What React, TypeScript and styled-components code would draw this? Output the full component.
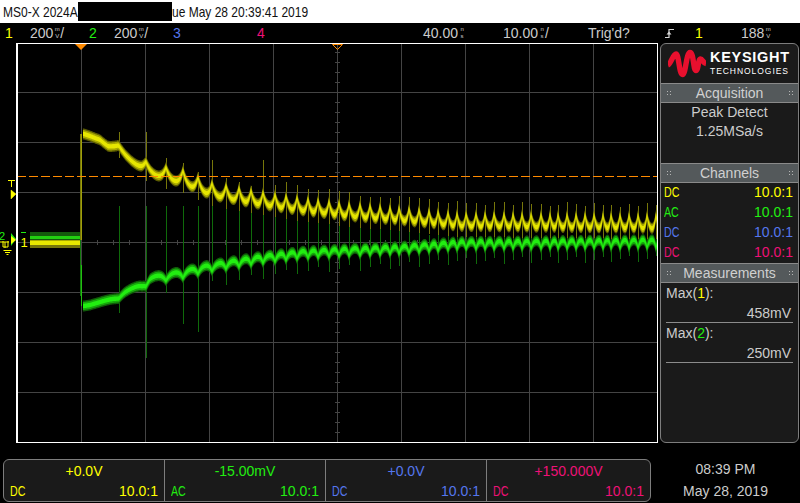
import React from 'react';
import styled, { createGlobalStyle } from 'styled-components';

const YELLOW = '#ffff00';
const GREEN = '#22ee11';
const BLUE = '#5577ee';
const PINK = '#ee1177';

const GlobalStyle = createGlobalStyle`
  html, body {
    margin: 0;
    padding: 0;
    background: #000;
  }
  body {
    font-family: 'Liberation Sans', Arial, sans-serif;
    font-size: 14px;
    color: #cccccc;
  }
`;

const Page = styled.div`
  width: 800px;
  height: 503px;
  overflow: hidden;
  display: flex;
  flex-direction: column;
  background: #000;
`;

const TitleBar = styled.div`
  height: 23px;
  flex: none;
  background: #fff;
  color: #111;
  display: flex;
  align-items: center;
  padding-left: 3px;
  font-size: 15px;
`;

const TitleText = styled.span<{ $width: number }>`
  width: ${(p) => p.$width}px;
  flex: none;
  white-space: nowrap;
  transform: scaleX(0.8);
  transform-origin: left center;
`;

const Redaction = styled.div`
  width: 94px;
  height: 19px;
  flex: none;
  background: #000;
  margin-left: 1px;
`;

const StatusBar = styled.div`
  height: 20px;
  flex: none;
  display: flex;
  align-items: center;
  white-space: nowrap;
`;

const ChannelStatus = styled.div`
  width: 84px;
  flex: none;
  display: flex;
  align-items: center;
  padding-left: 5px;
  box-sizing: border-box;
`;

const StatusNum = styled.span<{ $color: string }>`
  color: ${(p) => p.$color};
  width: 25px;
  flex: none;
`;

const StatusRight = styled.div`
  display: grid;
  grid-template-columns: 80px 85px 77px 30px 46px auto;
  align-items: center;
  padding-left: 87px;
`;

const StatusItem = styled.span<{ $color?: string }>`
  display: flex;
  align-items: center;
  color: ${(p) => p.$color ?? '#cccccc'};
`;

const Stacked = styled.span`
  display: inline-flex;
  flex-direction: column;
  align-items: center;
  font-size: 6px;
  line-height: 7px;
  margin-left: 1px;
  width: 6px;
  flex: none;
`;

const Body = styled.div`
  height: 400px;
  flex: none;
  display: flex;
`;

const Plot = styled.svg`
  width: 659px;
  height: 400px;
  flex: none;
  display: block;
`;

const SidePanel = styled.aside`
  width: 139px;
  margin-left: 1px;
  height: 400px;
  box-sizing: border-box;
  border: 1px solid #7d7d7d;
  border-radius: 6px;
  background: #1a1a1a;
  display: flex;
  flex-direction: column;
  overflow: hidden;
`;

const LogoBox = styled.div`
  height: 39px;
  flex: none;
  display: flex;
  align-items: center;
  padding-left: 7px;
  gap: 4px;
  box-sizing: border-box;
`;

const LogoText = styled.div`
  color: #fff;
  display: flex;
  flex-direction: column;
  line-height: 1;
  margin-top: -2px;
`;

const LogoTop = styled.span`
  font-weight: 700;
  font-size: 14.5px;
  letter-spacing: 0.7px;
  margin-bottom: 2px;
`;

const LogoBottom = styled.span`
  font-size: 8.5px;
  letter-spacing: 0.95px;
`;

const SectionHead = styled.div`
  height: 20px;
  flex: none;
  box-sizing: border-box;
  background: #54595b;
  border-top: 1px solid #8a8a8a;
  border-bottom: 1px solid #8a8a8a;
  display: flex;
  align-items: center;
  justify-content: space-between;
  padding: 0 5px;
  color: #d0d0d0;
`;

const Grip = styled.span`
  width: 5px;
  height: 7px;
  flex: none;
  background-image: radial-gradient(circle, #b5b5b5 0.7px, transparent 0.8px);
  background-size: 3px 3px;
`;

const Section = styled.div<{ $height: number }>`
  height: ${(p) => p.$height}px;
  flex: none;
  box-sizing: border-box;
`;

const AcqLine = styled.div`
  text-align: center;
  height: 19px;
  line-height: 19px;
`;

const ChannelRow = styled.div<{ $color: string }>`
  height: 20px;
  line-height: 18px;
  display: flex;
  justify-content: space-between;
  padding: 0 5px 0 3px;
  color: ${(p) => p.$color};
`;

const Mode = styled.span`
  display: inline-block;
  width: 16px;
  white-space: nowrap;
  transform: scaleX(0.76);
  transform-origin: left center;
`;

const Measure = styled.div`
  margin: 0 5px;
  height: 40px;
  box-sizing: border-box;
  border-bottom: 1px solid #8c8c8c;
  line-height: 20px;
`;

const MeasureValue = styled.div`
  text-align: right;
  padding-right: 2px;
`;

const Footer = styled.div`
  flex: 1;
  display: flex;
  align-items: flex-end;
  padding: 0 0 1px 3px;
`;

const ChannelStrip = styled.div`
  width: 648px;
  height: 43px;
  box-sizing: border-box;
  flex: none;
  border: 1px solid #7d7d7d;
  border-radius: 6px;
  background: #1a1a1a;
  display: grid;
  grid-template-columns: 161px 161px 161px 1fr;
`;

const ChannelCell = styled.div<{ $color: string; $last?: boolean }>`
  color: ${(p) => p.$color};
  border-right: ${(p) => (p.$last ? 'none' : '1px solid #7d7d7d')};
  padding: 1px 6px 0 6px;
  display: flex;
  flex-direction: column;
  line-height: 20px;
`;

const CellValue = styled.div`
  text-align: center;
`;

const CellBottom = styled.div`
  display: flex;
  justify-content: space-between;
`;

const Clock = styled.div`
  flex: 1;
  text-align: center;
  line-height: 22px;
`;

// y values below are page coordinates, t() moves them into the svg
const TOP = 43;
const LEFT = 16;
const RIGHT = 657;
const BOTTOM = 442;

const spikes = [
  119, 146, 166, 183, 198, 212, 226, 239, 251, 263, 275, 286, 297, 308, 318, 329, 339, 349, 360,
  370, 380, 390, 399, 409, 419, 429, 438, 448, 457, 466, 476, 485, 494, 504, 513, 522, 531, 541,
  550, 558, 567, 576, 585, 594, 603, 611, 620, 629, 638, 647, 656,
];

type Table = [number, number][];

const yellowTrough: Table = [
  [84, 134], [90, 136], [100, 140], [108, 147], [118, 149], [125, 156], [142, 171], [165, 181],
  [183, 185], [198, 192], [212, 198], [260, 207], [300, 213], [350, 219], [400, 223], [460, 229],
  [657, 231],
];
const yellowHeight: Table = [[119, 4], [146, 11], [166, 14], [200, 15], [657, 16]];

const greenCrest: Table = [
  [84, 306], [90, 305], [100, 302], [118, 296], [125, 291], [142, 283], [150, 276], [165, 273],
  [183, 270], [198, 266], [212, 263], [260, 255], [300, 250], [350, 247], [400, 245], [460, 240],
  [657, 238],
];
const greenHeight: Table = [[119, 3], [146, 7], [166, 8], [657, 10]];

const yellowSpikeTop: Record<number, number> = {
  119: 132, 146: 132, 166: 158, 183: 163, 198: 172, 212: 160, 226: 178, 239: 182, 251: 186,
  263: 160, 275: 185, 286: 182,
};

function interp(table: Table, x: number) {
  if (x <= table[0][0]) return table[0][1];
  for (let i = 1; i < table.length; i++) {
    if (x <= table[i][0]) {
      const [x0, y0] = table[i - 1];
      const [x1, y1] = table[i];
      return y0 + ((y1 - y0) * (x - x0)) / (x1 - x0);
    }
  }
  return table[table.length - 1][1];
}

function toothPhase(x: number) {
  let prev = 81;
  let next = spikes[0];
  for (const s of spikes) {
    if (s > x) {
      next = s;
      break;
    }
    prev = s;
    next = s + 9;
  }
  return { p: (x - prev) / (next - prev), prev, next };
}

// centre of a trace at x: cusps pointing away from the base curve at every spike
function traceY(table: Table, heights: Table, dir: number, x: number) {
  const { p, prev, next } = toothPhase(x);
  const fall = prev === 81 ? 0 : interp(heights, prev) * Math.exp(-p * 4);
  const rise = interp(heights, next) * Math.pow(p, 5);
  return interp(table, x) - dir * (fall + rise);
}

// the trace is a band of constant vertical thickness, as peak detect draws it
function bandPath(table: Table, heights: Table, dir: number, half: number) {
  const top: string[] = [];
  const bottom: string[] = [];
  for (let x = 83; x <= RIGHT; x += 0.5) {
    const y = traceY(table, heights, dir, x) - TOP;
    top.push(`${x},${(y - half).toFixed(1)}`);
    bottom.unshift(`${x},${(y + half).toFixed(1)}`);
  }
  return `M${top.join(' L')} L${bottom.join(' L')} Z`;
}

const bands = [
  { table: yellowTrough, heights: yellowHeight, dir: 1, colors: ['#5c5c00', '#a8a800', '#e6e600'] },
  { table: greenCrest, heights: greenHeight, dir: -1, colors: ['#0f5a08', '#17a80c', '#22ee11'] },
];
const halves = [5.5, 4, 2.2];

const gridXs = [81, 145, 209, 273, 401, 465, 529, 593];
const gridYs = [92, 142, 192, 292, 342, 392];
const tickXs: number[] = [];
for (let x = 97; x < RIGHT; x += 16) tickXs.push(x);
const tickYs: number[] = [];
for (let y = 52; y < BOTTOM; y += 10) tickYs.push(y);

function Scope() {
  const t = (y: number) => y - TOP;
  return (
    <Plot viewBox="0 0 659 400">
      <g stroke="#444" strokeWidth="1" shapeRendering="crispEdges">
        {gridXs.map((x) => (
          <line key={x} x1={x + 0.5} x2={x + 0.5} y1={0} y2={399} />
        ))}
        {gridYs.map((y) => (
          <line key={y} x1={LEFT} x2={RIGHT} y1={t(y) + 0.5} y2={t(y) + 0.5} />
        ))}
        <line x1={337.5} x2={337.5} y1={0} y2={399} />
        <line x1={LEFT} x2={RIGHT} y1={t(242) + 0.5} y2={t(242) + 0.5} />
        {tickXs.map((x) => (
          <line key={x} x1={x + 0.5} x2={x + 0.5} y1={t(240)} y2={t(245)} />
        ))}
        {tickYs.map((y) => (
          <line key={y} x1={335} x2={340} y1={t(y) + 0.5} y2={t(y) + 0.5} />
        ))}
      </g>

      {/* peak detect glitches */}
      <g strokeWidth="1" shapeRendering="crispEdges">
        {spikes.map((s, i) => {
          const gy = interp(greenCrest, s);
          const down = i < 5 ? [313, 358, 293, 324, 332][i] : gy + 24 - (i % 3) * 3;
          const up = i < 5 ? 206 : s < 420 ? interp(yellowTrough, s) : gy - 8;
          return <line key={s} x1={s + 0.5} x2={s + 0.5} y1={t(up)} y2={t(down)} stroke="#0f6a0a" />;
        })}
        {spikes.map((s) => {
          const base = interp(yellowTrough, s);
          const top = yellowSpikeTop[s] ?? base - 24 - ((s * 7) % 5);
          return <line key={s} x1={s + 0.5} x2={s + 0.5} y1={t(top)} y2={t(base + 8)} stroke="#77770a" />;
        })}
        <line x1={80.5} x2={80.5} y1={t(134)} y2={t(246)} stroke="#77770a" />
        <line x1={81.5} x2={81.5} y1={t(134)} y2={t(240)} stroke="#a0a00a" />
        <line x1={80.5} x2={80.5} y1={t(240)} y2={t(296)} stroke="#127a0c" />
        <line x1={81.5} x2={81.5} y1={t(265)} y2={t(306)} stroke="#22c011" />
      </g>

      {bands.map((b, i) => (
        <g key={i}>
          {b.colors.map((c, j) => (
            <path key={c} d={bandPath(b.table, b.heights, b.dir, halves[j])} fill={c} />
          ))}
        </g>
      ))}

      {/* pre-trigger band */}
      <g shapeRendering="crispEdges">
        <rect x={30} y={t(232)} width={50} height={4} fill="#145a0c" />
        <rect x={30} y={t(236)} width={50} height={3} fill="#22d011" />
        <rect x={30} y={t(239)} width={50} height={1} fill="#145a0c" />
        <rect x={30} y={t(240)} width={50} height={1} fill="#a8a800" />
        <rect x={30} y={t(241)} width={50} height={4} fill="#e8e800" />
        <rect x={30} y={t(245)} width={50} height={3} fill="#77770a" />
      </g>

      <line
        x1={LEFT + 1}
        x2={RIGHT}
        y1={t(176) + 0.5}
        y2={t(176) + 0.5}
        stroke="#ff8a00"
        strokeWidth="1"
        strokeDasharray="9 3"
        shapeRendering="crispEdges"
      />

      <rect x={16.5} y={0.5} width={641} height={399} fill="none" stroke="#fff" shapeRendering="crispEdges" />
      <line x1={17.5} x2={17.5} y1={0} y2={400} stroke="#fff" shapeRendering="crispEdges" />

      {/* delay markers */}
      <path d="M75 1 H87 L81 7 Z" fill="#ff8a00" />
      <path d="M332.5 1.5 H342.5 L337.5 6.5 Z" fill="none" stroke="#ff8a00" />

      {/* trigger level marker */}
      <path d="M8 137.5 H15 M11.5 137 V144" stroke={YELLOW} fill="none" />
      <path d="M11 147 L16 151 L11 156 Z" fill={YELLOW} stroke={YELLOW} strokeWidth="0.5" />

      {/* channel markers */}
      <path d="M11 190 L16 196 L11 203 Z" fill={GREEN} />
      <path d="M11 193 L16 197 L11 201 Z" fill={YELLOW} />
      <text x={-1} y={197} fontSize="11" fill={GREEN} fontFamily="'Liberation Sans', sans-serif">2</text>
      <path d="M0 199 H9 M5 199 V205 M3 198 V204 H8 V198" stroke={YELLOW} fill="none" strokeWidth="1" />
      <path d="M3.5 207.5 H11.5 M5 209.5 H10 M6.5 211.5 H8.5" stroke={YELLOW} fill="none" />
      <path d="M21 189.5 H26" stroke={GREEN} fill="none" />
      <text x={20.5} y={204} fontSize="13" fill={YELLOW} fontFamily="'Liberation Sans', sans-serif">1</text>
    </Plot>
  );
}

function Logo() {
  return (
    <svg width="38" height="30" viewBox="0 0 38 30">
      <path
        fill="none"
        stroke="#e8102e"
        strokeWidth="5.4"
        d="M0 16 C3 15 5 5 8 5 C11 5 11 25.5 14.5 25.5 C18 25.5 18 3.5 22 3.5 C26 3.5 25 21.5 28 21.5 C30.5 21.5 30 10 32.5 10 C34.5 10 35 14 38 14.5"
      />
    </svg>
  );
}

function TrigEdge() {
  return (
    <svg width="9" height="11" viewBox="0 0 9 11">
      <path d="M0 9.5 H4 V1.5 H9" fill="none" stroke="#d8d8d8" strokeWidth="1.2" />
      <path d="M1.5 6.5 H6.5 L4 3.5 Z" fill="#d8d8d8" />
    </svg>
  );
}

function Head({ title }: { title: string }) {
  return (
    <SectionHead>
      <Grip />
      <span>{title}</span>
      <Grip />
    </SectionHead>
  );
}

function Unit({ top, bottom }: { top: string; bottom: string }) {
  return (
    <Stacked>
      <span>{top}</span>
      <span>{bottom}</span>
    </Stacked>
  );
}

const channelRows = [
  { mode: 'DC', color: YELLOW },
  { mode: 'AC', color: GREEN },
  { mode: 'DC', color: BLUE },
  { mode: 'DC', color: PINK },
];

const offsets = ['+0.0V', '-15.00mV', '+0.0V', '+150.000V'];

export default function App() {
  return (
    <Page>
      <GlobalStyle />
      <TitleBar>
        <TitleText $width={74}>MS0-X 2024A</TitleText>
        <Redaction />
        <TitleText $width={135}>ue May 28 20:39:41 2019</TitleText>
      </TitleBar>

      <StatusBar>
        <ChannelStatus>
          <StatusNum $color={YELLOW}>1</StatusNum>
          200<Unit top="m" bottom="V" />/
        </ChannelStatus>
        <ChannelStatus>
          <StatusNum $color={GREEN}>2</StatusNum>
          200<Unit top="m" bottom="V" />/
        </ChannelStatus>
        <ChannelStatus>
          <StatusNum $color={BLUE}>3</StatusNum>
        </ChannelStatus>
        <ChannelStatus>
          <StatusNum $color={PINK}>4</StatusNum>
        </ChannelStatus>
        <StatusRight>
          <StatusItem>
            40.00<Unit top="n" bottom="s" />
          </StatusItem>
          <StatusItem>
            10.00<Unit top="n" bottom="s" />/
          </StatusItem>
          <StatusItem>Trig'd?</StatusItem>
          <StatusItem><TrigEdge /></StatusItem>
          <StatusItem $color={YELLOW}>1</StatusItem>
          <StatusItem>
            188<Unit top="m" bottom="V" />
          </StatusItem>
        </StatusRight>
      </StatusBar>

      <Body>
        <Scope />
        <SidePanel>
          <LogoBox>
            <Logo />
            <LogoText>
              <LogoTop>KEYSIGHT</LogoTop>
              <LogoBottom>TECHNOLOGIES</LogoBottom>
            </LogoText>
          </LogoBox>
          <Head title="Acquisition" />
          <Section $height={60}>
            <AcqLine>Peak Detect</AcqLine>
            <AcqLine>1.25MSa/s</AcqLine>
          </Section>
          <Head title="Channels" />
          <Section $height={80}>
            {channelRows.map((c, i) => (
              <ChannelRow key={i} $color={c.color}>
                <Mode>{c.mode}</Mode>
                <span>10.0:1</span>
              </ChannelRow>
            ))}
          </Section>
          <Head title="Measurements" />
          <Section $height={100}>
            <Measure>
              Max(<span style={{ color: YELLOW }}>1</span>):
              <MeasureValue>458mV</MeasureValue>
            </Measure>
            <Measure>
              Max(<span style={{ color: GREEN }}>2</span>):
              <MeasureValue>250mV</MeasureValue>
            </Measure>
          </Section>
        </SidePanel>
      </Body>

      <Footer>
        <ChannelStrip>
          {channelRows.map((c, i) => (
            <ChannelCell key={i} $color={c.color} $last={i === 3}>
              <CellValue>{offsets[i]}</CellValue>
              <CellBottom>
                <Mode>{c.mode}</Mode>
                <span>10.0:1</span>
              </CellBottom>
            </ChannelCell>
          ))}
        </ChannelStrip>
        <Clock>
          <div>08:39 PM</div>
          <div>May 28, 2019</div>
        </Clock>
      </Footer>
    </Page>
  );
}
